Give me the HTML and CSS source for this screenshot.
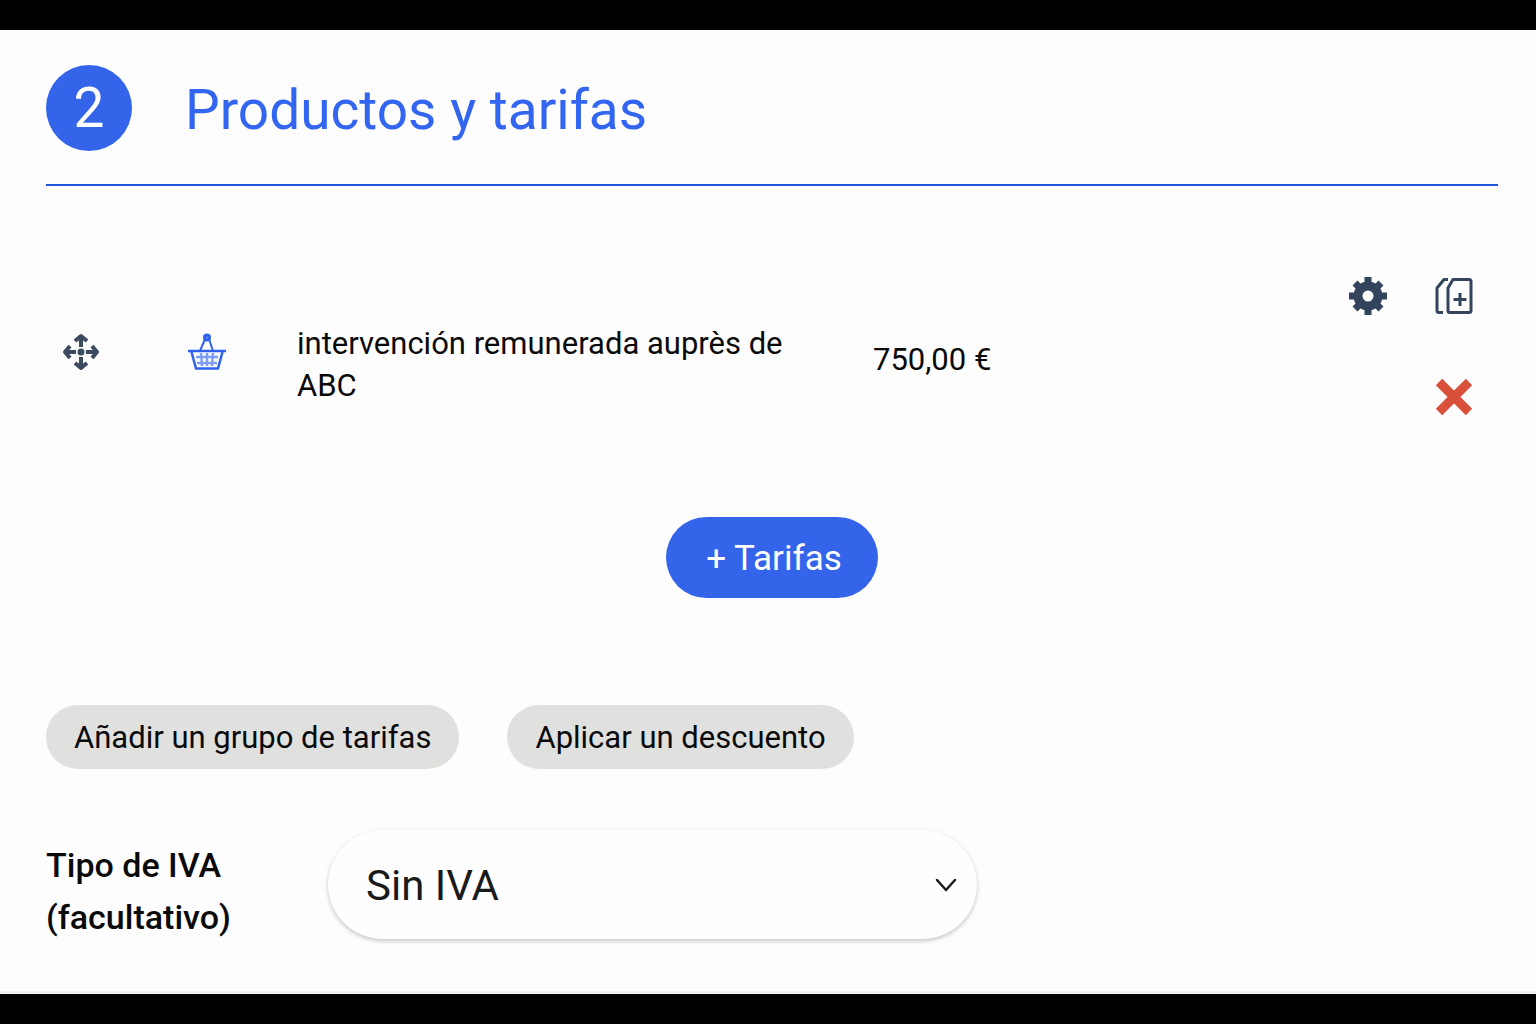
FILE: index.html
```html
<!DOCTYPE html>
<html lang="es">

<head>
    <meta charset="UTF-8">
    <meta name="viewport" content="width=device-width, initial-scale=1.0">
    <title>Productos y tarifas</title>
    <link rel="stylesheet" href="styles.css">
</head>

<body>
    <main class="step">
        <header class="step-header">
            <span class="step-number">2</span>
            <h1 class="step-title">Productos y tarifas</h1>
        </header>

        <div class="product">
            <button class="icon-button" type="button" aria-label="Mover">
                <svg class="icon" viewBox="0 0 38 38" fill="none" stroke="#3b4a5c" stroke-width="4">
                    <path d="M19 3v11M19 24v11M3 19h11M24 19h11" />
                    <path d="M13 8l6-5 6 5M13 30l6 5 6-5M8 13l-5 6 5 6M30 13l5 6-5 6" stroke-linejoin="round" />
                    <circle cx="19" cy="19" r="3.500" fill="#3b4a5c" stroke="none" />
                </svg>
            </button>
            <svg class="icon" viewBox="0 0 38 38" fill="none" stroke="#2f62ee" stroke-width="2">
                <path d="M12 18l5-12M25 18L21 6" />
                <circle cx="19" cy="4.500" r="2.500" fill="#6f91f4" stroke-width="3" />
                <path d="M0 18h38" stroke-width="2.500" />
                <path d="M3.500 19l4.500 16.500h22L34.500 19" stroke-width="2.500" />
                <path d="M8 24h22M9 30h20M13 20l1 13M19 20v13M25 20l-1 13" stroke="#7f9ef6" stroke-width="2.500" />
            </svg>
            <p class="product-name">intervención remunerada auprès de ABC</p>
            <p class="product-price">750,00 €</p>
            <div class="product-actions">
                <button class="icon-button" type="button" aria-label="Configurar">
                    <svg class="icon" viewBox="0 0 38 38" fill="none" stroke="#33445c">
                        <circle cx="19" cy="19" r="10" stroke-width="9" />
                        <path d="M19 0v7M19 31v7M0 19h7M31 19h7M6 6l5 5M27 27l5 5M32 6l-5 5M11 27l-5 5" stroke-width="7" />
                    </svg>
                </button>
                <button class="icon-button" type="button" aria-label="Duplicar">
                    <svg class="icon" viewBox="0 0 38 38" fill="none" stroke="#33445c" stroke-width="3" stroke-linejoin="round">
                        <path d="M18 2.500h16a2 2 0 0 1 2 2v29a2 2 0 0 1-2 2H15a2 2 0 0 1-2-2V11z" />
                        <path d="M13 2.500H9L2 11v22.500a2 2 0 0 0 2 2h4" />
                        <path d="M25 16v13M18.500 22.500h13" />
                    </svg>
                </button>
                <button class="icon-button icon-button-delete" type="button" aria-label="Eliminar">
                    <svg class="icon" viewBox="0 0 38 38" fill="none" stroke="#d9503a" stroke-width="9">
                        <path d="M4 4l30 30M34 4L4 34" />
                    </svg>
                </button>
            </div>
        </div>

        <button class="button button-primary" type="button">+ Tarifas</button>

        <div class="button-row">
            <button class="button" type="button">Añadir un grupo de tarifas</button>
            <button class="button" type="button">Aplicar un descuento</button>
        </div>

        <div class="field">
            <label class="field-label" for="iva">Tipo de IVA (facultativo)</label>
            <div class="select-wrap">
                <select class="select" id="iva">
                    <option>Sin IVA</option>
                </select>
                <svg class="select-arrow" viewBox="0 0 24 16" fill="none" stroke="#1a1a1a" stroke-width="2.500" stroke-linecap="round">
                    <path d="M3 3l9 10 9-10" />
                </svg>
            </div>
        </div>
    </main>
</body>

</html>
```
FILE: styles.css
```css
* {
    box-sizing: border-box;
}

body {
    margin: 0;
    min-height: 100vh;
    display: flex;
    border-top: 30px solid #000;
    border-bottom: 30px solid #000;
    background-color: #fdfdfd;
    font-family: Roboto, sans-serif;
    font-size: 31px;
    color: #0a0a0a;
}

h1,
p {
    margin: 0;
}

.step {
    flex: 1;
    padding: 35px 38px 48px 46px;
    border-bottom: 3px solid #f1f1f1;
}

.step-header {
    display: flex;
    align-items: center;
    gap: 53px;
    padding-bottom: 33px;
    border-bottom: 2px solid #2453dc;
    color: #3366f0;
}

.step-number {
    width: 86px;
    height: 86px;
    border-radius: 50%;
    background-color: #3464ea;
    color: #fff;
    font-size: 55px;
    line-height: 86px;
    text-align: center;
}

.step-title {
    padding-top: 4px;
    font-size: 55px;
    font-weight: 400;
    line-height: 82px;
}

.product {
    display: grid;
    grid-template-columns: 126px 109px 576px 1fr auto;
    align-items: center;
    min-height: 176px;
    margin-top: 91px;
    padding: 0 25px 0 16px;
}

.icon-button {
    display: flex;
    padding: 0;
    border: 0;
    background: none;
    cursor: pointer;
}

.icon {
    width: 38px;
    height: 38px;
}

.product > .icon-button,
.product > .icon {
    margin-bottom: 26px;
}

.product-name {
    max-width: 510px;
    line-height: 42px;
}

.product-price {
    margin-bottom: 12px;
}

.product-actions {
    display: grid;
    grid-template-columns: 38px 38px;
    gap: 63px 48px;
    align-self: start;
}

.icon-button-delete {
    grid-column: 2;
}

.button {
    height: 64px;
    padding: 0 28px;
    border: 0;
    border-radius: 32px;
    background-color: #e0e0df;
    color: #0a0a0a;
    font-family: inherit;
    font-size: 31px;
    cursor: pointer;
}

.button-primary {
    display: block;
    height: 81px;
    margin: 64px auto 0;
    padding: 2px 36px 0 40px;
    border-radius: 41px;
    background-color: #3464ea;
    color: #fff;
    font-size: 35px;
}

.button-row {
    display: flex;
    flex-wrap: wrap;
    gap: 48px;
    margin-top: 107px;
}

.field {
    display: flex;
    align-items: flex-start;
    margin-top: 61px;
}

.field-label {
    width: 282px;
    padding: 9px 60px 0 0;
    font-size: 34px;
    font-weight: 500;
    line-height: 52px;
}

.select-wrap {
    position: relative;
    flex: 1;
    max-width: 649px;
}

.select {
    display: block;
    width: 100%;
    height: 109px;
    padding: 2px 38px 0;
    border: 0;
    border-radius: 55px;
    appearance: none;
    background-color: #fefefe;
    box-shadow: 0 2px 4px rgba(0, 0, 0, 0.22);
    color: #1a1a1a;
    font-family: inherit;
    font-size: 42px;
}

.select-arrow {
    position: absolute;
    top: 47px;
    right: 19px;
    width: 24px;
    height: 16px;
    pointer-events: none;
}
```
